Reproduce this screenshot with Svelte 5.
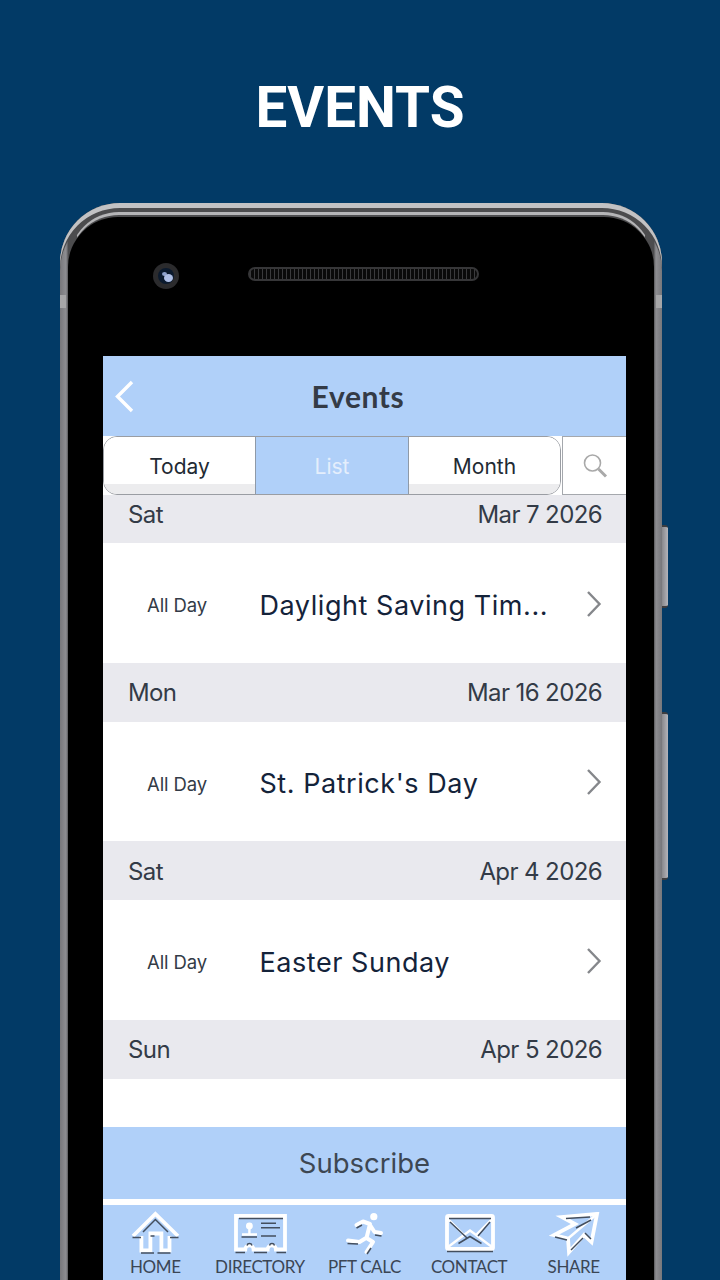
<script>
	const tabs = [
		{ label: 'Today', cls: 'first' },
		{ label: 'List', cls: 'active' },
		{ label: 'Month', cls: 'last' }
	];

	const events = [
		{ day: 'Sat', date: 'Mar 7 2026', title: 'Daylight Saving Tim...' },
		{ day: 'Mon', date: 'Mar 16 2026', title: "St. Patrick's Day" },
		{ day: 'Sat', date: 'Apr 4 2026', title: 'Easter Sunday' }
	];
</script>

<main class="page">
	<h1>EVENTS</h1>

	<div class="phone">
		<span class="shine"></span>
		<span class="band band-left"></span>
		<span class="band band-right"></span>
		<span class="side-btn power"></span>
		<span class="side-btn volume"></span>

		<div class="bezel">
			<div class="sensors">
				<div class="camera"><span class="lens"></span><span class="glint"></span></div>
				<div class="speaker"></div>
			</div>

			<div class="screen">
				<header class="topbar">
					<svg class="back" width="20" height="34" viewBox="0 0 20 34">
						<path d="M17 2 L2.5 16.5 L17 31" />
					</svg>
					<span class="heading">Events</span>
				</header>

				<div class="tabbar">
					<div class="segments">
						{#each tabs as tab}
							<div class="segment {tab.cls}">{tab.label}</div>
						{/each}
					</div>
					<div class="search">
						<svg width="28" height="28" viewBox="0 0 28 28">
							<circle cx="11.5" cy="11" r="8" />
							<path d="M17.5 17 L25 24.5" />
						</svg>
					</div>
				</div>

				<div class="list">
					{#each events as ev}
						<div class="date-row"><span>{ev.day}</span><span>{ev.date}</span></div>
						<div class="event-row">
							<span class="allday">All Day</span>
							<span class="title">{ev.title}</span>
							<svg class="chevron" width="16" height="28" viewBox="0 0 16 28">
								<path d="M2 2 L13.5 14 L2 26" />
							</svg>
						</div>
					{/each}
					<div class="date-row"><span>Sun</span><span>Apr 5 2026</span></div>
				</div>

				<div class="subscribe">Subscribe</div>

				<nav class="tabnav">
					<div class="nav-item">
						<svg width="60" height="46" viewBox="0 0 60 46">
							<g class="white">
								<path d="M8 25 L30.4 3 L53 25" />
								<path d="M16.4 25 V39.5 H25.4 V22.5 H36.4 V39.5 H44.5 V25" />
							</g>
							<g class="dark">
								<path d="M18 21 L30.4 8.5 L43 21" />
								<path d="M7.5 26.5 H16 M45 26.5 H53.5" />
								<path d="M16 42 H29 M32.5 42 H45.5" />
								<path d="M25.5 25 H29.5" />
							</g>
						</svg>
						<span>HOME</span>
					</div>
					<div class="nav-item">
						<svg width="60" height="46" viewBox="0 0 60 46">
							<path class="white" d="M6 5 H55 V38.5 H46 A4.2 4.2 0 0 0 37.6 38.5 H23.6 A4.2 4.2 0 0 0 15.2 38.5 H6 Z" />
							<circle class="fill-white" cx="19.4" cy="15" r="3.4" />
							<path class="white thin" d="M12 23.5 H27 M19.4 17 V23.5" />
							<g class="dark">
								<path d="M9 7.5 H53" />
								<path d="M11.5 26 H27" />
								<path d="M31 12.3 H46 M31 16.7 H50 M31 25 H46" />
								<path d="M5.5 41.5 H15 M24 41.5 H37 M46.5 41.5 H56" />
								<path d="M17 34.5 A2.6 2.6 0 0 1 22 34.5 M39.5 34.5 A2.6 2.6 0 0 1 44.5 34.5" />
							</g>
						</svg>
						<span>DIRECTORY</span>
					</div>
					<div class="nav-item">
						<svg width="60" height="46" viewBox="0 0 60 46">
							<circle class="fill-white" cx="39.8" cy="5.7" r="3.6" />
							<path class="white runner" d="M22.5 14 L29 10.5 L36 13 L32.5 27 L39 31 L32.5 41 M36 14 L40.5 21 L47 22 M32 27 L25.5 31 L14 29.5" />
							<g class="dark">
								<path d="M22.5 17 L28 14" />
								<path d="M41 24 L47.5 25" />
								<path d="M13.5 32.5 L24 33" />
								<path d="M37 37 L33 43" />
							</g>
						</svg>
						<span>PFT CALC</span>
					</div>
					<div class="nav-item">
						<svg width="60" height="46" viewBox="0 0 60 46">
							<rect class="white" x="8" y="5" width="46" height="33" rx="1.5" />
							<path class="white thin" d="M9 8 L25 24 L31 19.5 L37 24 L53 8 M9 36 L25 24 M53 36 L37 24" />
							<g class="dark">
								<path d="M10 7.5 H52" />
								<path d="M11 11 L28 27 M51 11 L39 25" />
								<path d="M19.5 32.5 L31 25.5 L42.5 32.5" />
								<path d="M8 40.5 H54" />
							</g>
						</svg>
						<span>CONTACT</span>
					</div>
					<div class="nav-item">
						<svg width="60" height="46" viewBox="0 0 60 46">
							<path class="white" d="M53 3 L18 6 L31 13 L10 24 L24 27.5 L25 41 L40 24 L47.5 31 Z" />
							<path class="white thin" d="M53 3 L24 27.5" />
							<g class="dark">
								<path d="M22 7.5 L46 6" />
								<path d="M32 17 L47 9" />
								<path d="M11 26 L23 29" />
								<path d="M27 39 L39 27" />
								<path d="M41 22 L47 28" />
							</g>
						</svg>
						<span>SHARE</span>
					</div>
				</nav>
			</div>
		</div>
	</div>
</main>

<style>
	:global(body) {
		margin: 0;
		background: #023a66;
	}

	.page {
		width: 720px;
		height: 1280px;
		overflow: hidden;
		background: #023a66;
	}

	h1 {
		margin: 0;
		height: 203px;
		box-sizing: border-box;
		padding-top: 73px;
		text-align: center;
		font-family: Roboto, sans-serif;
		font-weight: 700;
		font-size: 56.5px;
		line-height: 70px;
		color: #fff;
	}

	.phone {
		position: relative;
		width: 602px;
		height: 1120px;
		margin-left: 60px;
		box-sizing: border-box;
		padding: 14px 8px 0;
		border-radius: 60px 60px 0 0;
		background: linear-gradient(90deg, #77777b 0, #8e8e92 1%, #4c4c4e 1.4%, #4c4c4e 98.6%, #8e8e92 99%, #77777b 100%);
		box-shadow: inset 0 5px 0 #c2c2c4, inset 0 8px 0 #4c4c4e;
	}

	.shine {
		position: absolute;
		left: 9px;
		right: 9px;
		top: 9px;
		height: 50px;
		box-sizing: border-box;
		border-top: 3px solid #b5b5b7;
		border-left: 1px solid transparent;
		border-right: 1px solid transparent;
		border-radius: 52px 52px 0 0;
		z-index: 2;
	}

	.band {
		position: absolute;
		top: 92px;
		width: 6px;
		height: 13px;
		background: #a6a6a8;
	}

	.band-left { left: 0; }
	.band-right { right: 0; }

	.side-btn {
		position: absolute;
		left: 602px;
		width: 6px;
		border-radius: 0 3px 3px 0;
		background: linear-gradient(90deg, #88888c, #b4b4ba);
		border-top: 2px solid #3d3d40;
		border-bottom: 2px solid #3d3d40;
		box-sizing: border-box;
	}

	.power {
		top: 322px;
		height: 83px;
	}

	.volume {
		top: 509px;
		height: 168px;
	}

	.bezel {
		position: relative;
		height: 100%;
		box-sizing: border-box;
		padding: 46px 28px 0 35px;
		border-radius: 50px 50px 0 0;
		background: #000;
	}

	.sensors {
		display: flex;
		align-items: center;
		gap: 69px;
		height: 26px;
		padding-left: 50px;
	}

	.camera {
		position: relative;
		width: 26px;
		height: 26px;
		border-radius: 50%;
		background: #2b2b2d;
		display: flex;
		align-items: center;
		justify-content: center;
	}

	.lens {
		width: 16px;
		height: 16px;
		border-radius: 50%;
		background: #0b1a2e;
	}

	.glint {
		position: absolute;
		left: 11px;
		top: 11px;
		width: 9px;
		height: 8px;
		border-radius: 50%;
		background: #aebfe6;
		box-shadow: -4px -4px 0 -2px #8ea2cc;
	}

	.speaker {
		width: 231px;
		height: 14px;
		margin-bottom: 4px;
		box-sizing: border-box;
		border: 2px solid #363638;
		border-radius: 7px;
		background: repeating-linear-gradient(90deg, #3a3a3c 0 1px, #0a0a0a 1px 4px);
	}

	.screen {
		display: flex;
		flex-direction: column;
		width: 523px;
		height: 924px;
		margin-top: 67px;
		background: #fff;
		font-family: Inter, sans-serif;
	}

	.topbar {
		position: relative;
		flex: none;
		height: 80px;
		display: flex;
		align-items: center;
		justify-content: center;
		background: #b0d0f9;
	}

	.back {
		position: absolute;
		left: 12px;
		top: 24px;
		fill: none;
		stroke: #fff;
		stroke-width: 3.4;
	}

	.heading {
		margin-left: -13px;
		font-family: Lato, sans-serif;
		font-weight: 700;
		font-size: 30px;
		letter-spacing: 0.6px;
		color: #343b46;
	}

	.tabbar {
		position: relative;
		z-index: 1;
		flex: none;
		height: 59px;
		display: flex;
		background: #fff;
	}

	.segments {
		flex: none;
		display: flex;
		width: 458px;
		height: 59px;
		box-sizing: border-box;
		border: 1px solid #9a9da3;
		border-radius: 14px;
		overflow: hidden;
	}

	.segment {
		display: flex;
		align-items: center;
		justify-content: center;
		box-sizing: border-box;
		font-size: 21px;
		color: #222a33;
		background: linear-gradient(#fff 0, #fff 47px, #ececee 47px);
		padding-top: 1px;
	}

	.segment.first { width: 151px; }

	.segment.active {
		width: 154px;
		background: #b0d0f9;
		color: #e4eefc;
		border-left: 1px solid #8f9aa8;
		border-right: 1px solid #8f9aa8;
	}

	.segment.last { flex: 1; }

	.search {
		flex: none;
		width: 64px;
		height: 59px;
		margin-left: 1px;
		box-sizing: border-box;
		border-left: 1px solid #a5a8ad;
		border-top: 1px solid #a5a8ad;
		border-bottom: 1px solid #a5a8ad;
		display: flex;
		align-items: center;
		justify-content: center;
	}

	.search svg {
		fill: none;
		stroke: #a9a9a9;
		stroke-width: 1.6;
	}

	.search svg path {
		stroke-width: 3;
	}

	.list {
		flex: 1;
		min-height: 0;
		overflow: hidden;
		margin-top: -11px;
	}

	.date-row {
		height: 59px;
		box-sizing: border-box;
		padding: 1px 24px 0 25px;
		display: flex;
		align-items: center;
		justify-content: space-between;
		background: #e9e9ee;
		font-size: 24px;
		letter-spacing: -0.6px;
		color: #333b47;
	}

	.event-row {
		position: relative;
		height: 119.5px;
		box-sizing: border-box;
		padding-top: 5px;
		display: flex;
		align-items: center;
	}

	.allday {
		flex: none;
		width: 156.5px;
		padding-left: 44px;
		box-sizing: border-box;
		font-size: 18.5px;
		letter-spacing: -0.1px;
		color: #333b47;
	}

	.title {
		white-space: nowrap;
		font-size: 27px;
		letter-spacing: 0.55px;
		color: #14233a;
	}

	.chevron {
		position: absolute;
		left: 483px;
		top: 46.5px;
		fill: none;
		stroke: #85878b;
		stroke-width: 2.4;
	}

	.subscribe {
		flex: none;
		height: 72px;
		display: flex;
		align-items: center;
		justify-content: center;
		margin-bottom: 6px;
		background: #b0d0f9;
		font-size: 27.5px;
		color: #3d4753;
	}

	.tabnav {
		flex: none;
		height: 75px;
		display: flex;
		background: #b0d0f9;
	}

	.nav-item {
		flex: 1;
		display: flex;
		flex-direction: column;
		align-items: center;
		padding-top: 6px;
		font-family: Lato, sans-serif;
		font-size: 17px;
		letter-spacing: -0.4px;
		line-height: 20px;
		color: #3b4655;
	}

	.nav-item svg {
		display: block;
		flex: none;
	}

	.white {
		fill: none;
		stroke: #fff;
		stroke-width: 3.8;
	}

	.white.thin {
		stroke-width: 2.4;
	}

	.white.runner {
		stroke-width: 4;
		stroke-linecap: round;
		stroke-linejoin: round;
	}

	.fill-white {
		fill: #fff;
	}

	.dark {
		fill: none;
		stroke: #434e5e;
		stroke-width: 1.5;
	}
</style>
